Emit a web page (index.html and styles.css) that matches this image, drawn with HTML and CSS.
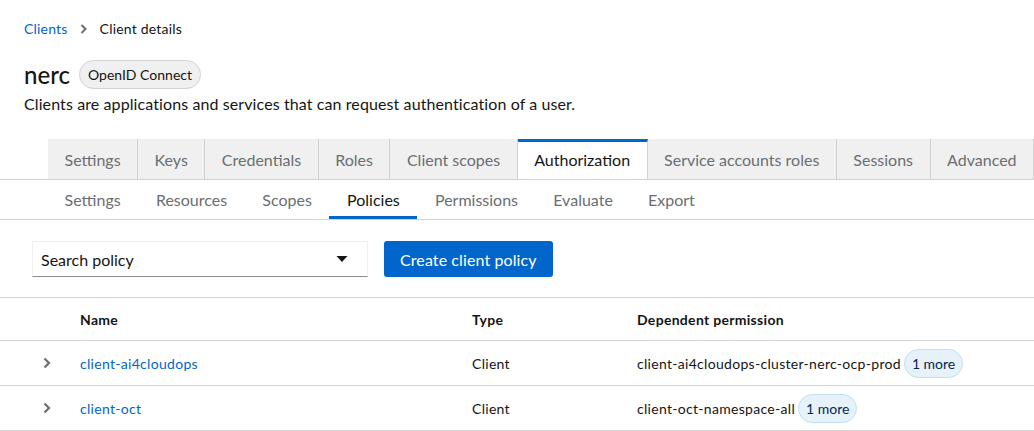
FILE: index.html
```html
<!DOCTYPE html>
<html>
<head>
<meta charset="utf-8">
<link rel="stylesheet" href="styles.css">
</head>
<body>
<div class="page">
  <section class="header">
    <nav class="breadcrumb">
      <a class="crumb-link">Clients</a>
      <svg class="crumb-sep" width="8" height="10" viewBox="0 0 8 10"><path d="M1.5 1 L5.5 5 L1.5 9" fill="none" stroke="#6a6e73" stroke-width="2"/></svg>
      <span class="crumb-current">Client details</span>
    </nav>
    <div class="title-row">
      <h1 class="title">nerc</h1>
      <span class="label">OpenID Connect</span>
    </div>
    <p class="description">Clients are applications and services that can request authentication of a user.</p>
  </section>

  <nav class="tabs">
    <div class="tab-list">
      <span class="tab">Settings</span>
      <span class="tab">Keys</span>
      <span class="tab">Credentials</span>
      <span class="tab">Roles</span>
      <span class="tab">Client scopes</span>
      <span class="tab active">Authorization</span>
      <span class="tab">Service accounts roles</span>
      <span class="tab">Sessions</span>
      <span class="tab">Advanced</span>
    </div>
  </nav>

  <nav class="subtabs">
    <span class="subtab">Settings</span>
    <span class="subtab">Resources</span>
    <span class="subtab">Scopes</span>
    <span class="subtab active">Policies</span>
    <span class="subtab">Permissions</span>
    <span class="subtab">Evaluate</span>
    <span class="subtab">Export</span>
  </nav>

  <div class="toolbar">
    <div class="select">
      <span>Search policy</span>
      <svg width="12" height="8" viewBox="0 0 12 8"><path d="M0.5 1 H11.5 L6 7 Z" fill="#151515"/></svg>
    </div>
    <button class="btn-primary">Create client policy</button>
  </div>

  <div class="table">
    <div class="row head">
      <span></span>
      <span>Name</span>
      <span>Type</span>
      <span>Dependent permission</span>
    </div>
    <div class="row">
      <span class="toggle"><svg width="8" height="12" viewBox="0 0 8 12"><path d="M1.5 1.5 L6 6 L1.5 10.5" fill="none" stroke="#6a6e73" stroke-width="2.2"/></svg></span>
      <a class="link">client-ai4cloudops</a>
      <span>Client</span>
      <span class="perm">client-ai4cloudops-cluster-nerc-ocp-prod <span class="label blue">1 more</span></span>
    </div>
    <div class="row">
      <span class="toggle"><svg width="8" height="12" viewBox="0 0 8 12"><path d="M1.5 1.5 L6 6 L1.5 10.5" fill="none" stroke="#6a6e73" stroke-width="2.2"/></svg></span>
      <a class="link">client-oct</a>
      <span>Client</span>
      <span class="perm">client-oct-namespace-all <span class="label blue">1 more</span></span>
    </div>
  </div>
</div>
</body>
</html>
```

FILE: styles.css
```css
* { box-sizing: border-box; }
html, body { margin: 0; padding: 0; overflow: hidden; }
body {
  font-family: "Lato", "Liberation Sans", sans-serif;
  color: #151515;
  background: #fff;
  width: 1034px;
}
.header {
  padding: 18px 24px 0 24px;
}
.breadcrumb {
  display: flex;
  align-items: center;
  gap: 12px;
  font-size: 14px;
  line-height: 21px;
  letter-spacing: 0.2px;
}
.crumb-link { color: #0066cc; }
.title-row {
  display: flex;
  align-items: center;
  gap: 9px;
  margin-top: 21px;
}
.title {
  margin: 0;
  font-size: 24px;
  font-weight: 500;
  line-height: 29px;
}
.label {
  display: inline-flex;
  align-items: center;
  font-size: 14px;
  line-height: 21px;
  padding: 3px 8px;
  border-radius: 30px;
  background: #f0f0f0;
  border: 1px solid #d2d2d2;
  color: #151515;
}
.label.blue {
  background: #e7f1fa;
  border-color: #bee1f4;
  color: #002952;
  padding: 3px 7px;
  letter-spacing: 0;
}
.description {
  margin: 3px 0 0 0;
  font-size: 16px;
  line-height: 24px;
  letter-spacing: 0.1px;
}
.tabs {
  margin-top: 23px;
  border-bottom: 1px solid #d2d2d2;
  padding-left: 48px;
  overflow: hidden;
}
.tab-list {
  display: flex;
  white-space: nowrap;
}
.tab {
  flex: none;
  height: 40px;
  padding: 0 16.5px;
  display: flex;
  align-items: center;
  background: #f0f0f0;
  color: #6a6e73;
  font-size: 16px;
  border-right: 1px solid #d2d2d2;
}
.tab.active {
  background: #fff;
  color: #151515;
  border-top: 3px solid #0066cc;
  padding-bottom: 3px;
  margin-bottom: -1px;
  height: 41px;
  position: relative;
}
.subtabs {
  display: flex;
  padding-left: 47px;
  border-bottom: 1px solid #d2d2d2;
  height: 40px;
}
.subtab {
  padding: 0 17.6px;
  display: flex;
  align-items: center;
  font-size: 16px;
  color: #6a6e73;
}
.subtab.active {
  color: #151515;
  border-bottom: 3px solid #0066cc;
  padding-top: 3px;
}
.toolbar {
  display: flex;
  align-items: center;
  gap: 16px;
  padding: 21px 32px 20px 32px;
  border-bottom: 1px solid #d2d2d2;
}
.select {
  width: 336px;
  height: 36px;
  display: flex;
  align-items: center;
  justify-content: space-between;
  padding: 0 19px 0 8px;
  border: 1px solid #f0f0f0;
  border-bottom: 1px solid #8a8d90;
  font-size: 16px;
}
.btn-primary {
  height: 36px;
  padding: 0 16px;
  background: #0066cc;
  color: #fff;
  border: none;
  border-radius: 3px;
  font-family: inherit;
  font-size: 16px;
  letter-spacing: 0.1px;
}
.row {
  display: grid;
  grid-template-columns: 80px 392px 165px 1fr;
  align-items: center;
  height: 45px;
  font-size: 14px;
  letter-spacing: 0.3px;
  border-bottom: 1px solid #d2d2d2;
}
.row.head {
  height: 43px;
  font-weight: 700;
  letter-spacing: 0.3px;
}
.toggle {
  display: flex;
  justify-content: flex-start;
  padding-left: 43px;
}
.link { color: #0066cc; }
.perm { display: flex; align-items: center; gap: 3px; }
```
